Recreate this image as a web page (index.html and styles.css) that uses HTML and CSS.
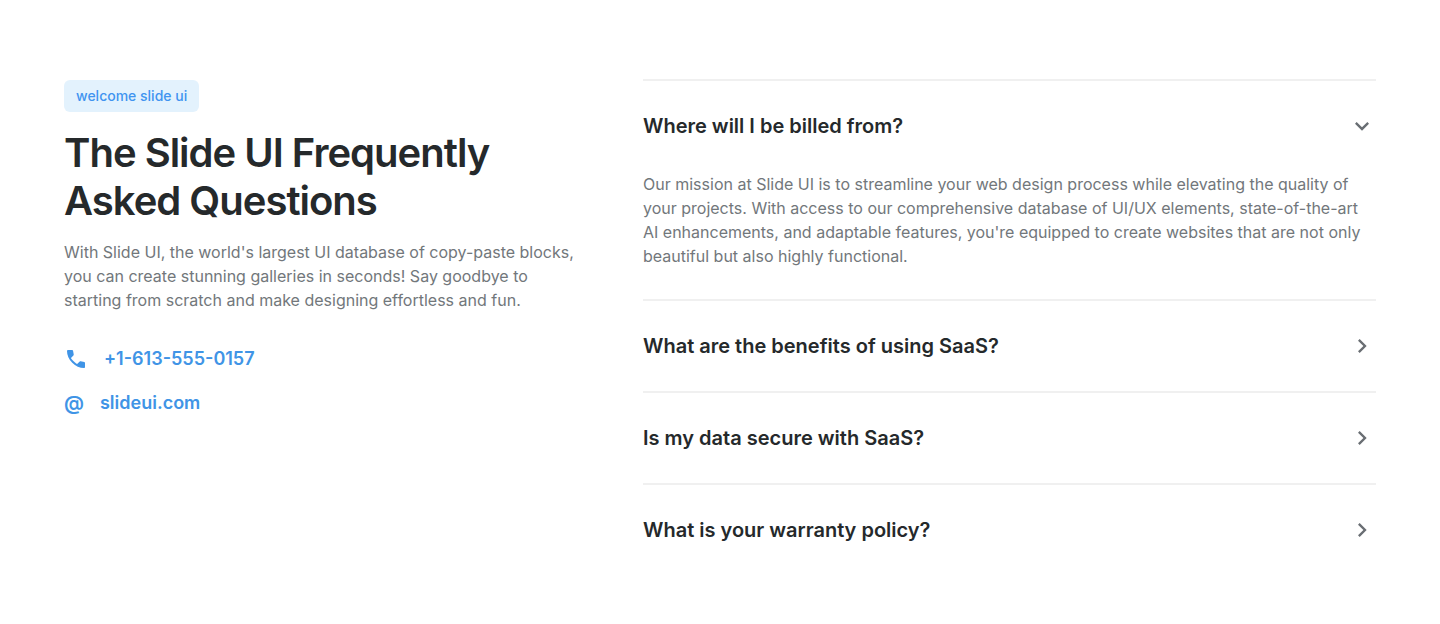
FILE: index.html
```html
<!DOCTYPE html>
<html lang="en">
<head>
<meta charset="utf-8">
<meta name="viewport" content="width=device-width, initial-scale=1">
<title>Slide UI FAQ</title>
<link rel="stylesheet" href="styles.css">
</head>
<body>
<main class="faq">
  <section class="intro">
    <span class="badge">welcome slide ui</span>
    <h1 class="title">The Slide UI Frequently Asked Questions</h1>
    <p class="text">With Slide UI, the world's largest UI database of copy-paste blocks, you can create stunning galleries in seconds! Say goodbye to starting from scratch and make designing effortless and fun.</p>
    <address class="contacts">
      <a class="contact" href="tel:+16135550157">
        <svg class="icon" viewBox="0 0 24 24" aria-hidden="true"><path fill="currentColor" d="M19.95 21q-3.125 0-6.175-1.363-3.05-1.362-5.55-3.862t-3.863-5.55Q3 7.175 3 4.05q0-.45.3-.75t.75-.3H8.1q.35 0 .625.238.275.237.325.562l.65 3.5q.05.4-.025.675-.075.275-.275.475L6.975 10.9q.5.925 1.188 1.787.687.863 1.512 1.663.775.775 1.625 1.438.85.662 1.8 1.212l2.35-2.35q.225-.225.588-.338.362-.112.712-.062l3.45.7q.35.1.575.363.225.262.225.587v4.05q0 .45-.3.75t-.75.3Z"/></svg>
        <span>+1-613-555-0157</span>
      </a>
      <a class="contact" href="https://slideui.com"><span class="at" aria-hidden="true">@</span><span>slideui.com</span></a>
    </address>
  </section>
  <section class="questions">
    <article class="item">
      <h2 class="heading"><button class="toggle" type="button" aria-expanded="true" aria-controls="answer"><span>Where will I be billed from?</span><svg class="chevron" viewBox="0 0 24 24" aria-hidden="true"><path d="M7.41 8.59 12 13.17l4.59-4.58L18 10l-6 6-6-6z"/></svg></button></h2>
      <p class="text answer" id="answer">Our mission at Slide UI is to streamline your web design process while elevating the quality of your projects. With access to our comprehensive database of UI/UX elements, state-of-the-art AI enhancements, and adaptable features, you're equipped to create websites that are not only beautiful but also highly functional.</p>
    </article>
    <article class="item"><h2 class="heading"><button class="toggle" type="button" aria-expanded="false"><span>What are the benefits of using SaaS?</span><svg class="chevron" viewBox="0 0 24 24" aria-hidden="true"><path d="M10 6 8.59 7.41 13.17 12l-4.58 4.59L10 18l6-6z"/></svg></button></h2></article>
    <article class="item"><h2 class="heading"><button class="toggle" type="button" aria-expanded="false"><span>Is my data secure with SaaS?</span><svg class="chevron" viewBox="0 0 24 24" aria-hidden="true"><path d="M10 6 8.59 7.41 13.17 12l-4.58 4.59L10 18l6-6z"/></svg></button></h2></article>
    <article class="item"><h2 class="heading"><button class="toggle" type="button" aria-expanded="false"><span>What is your warranty policy?</span><svg class="chevron" viewBox="0 0 24 24" aria-hidden="true"><path d="M10 6 8.59 7.41 13.17 12l-4.58 4.59L10 18l6-6z"/></svg></button></h2></article>
  </section>
</main>
</body>
</html>
```
FILE: styles.css
```css
* { box-sizing: border-box; }
body { margin: 0; background: #fff; color: #25292b; font-family: Inter, "Liberation Sans", sans-serif; }
.faq { display: grid; grid-template-columns: minmax(0, 515fr) minmax(0, 733fr); column-gap: 64px; padding: 79px 64px 48px; }
.badge { display: inline-block; margin-top: 1px; padding: 4px 12px; border-radius: 6px; background: #e3f2fd; color: #4094f0; font-size: 14px; line-height: 24px; font-weight: 500; }
.title { margin: 17px 0 15px; font-size: 40px; line-height: 48px; font-weight: 600; letter-spacing: -1px; }
.text { margin: 0; color: #72777b; font-size: 16px; line-height: 24px; }
.contacts { display: flex; flex-direction: column; align-items: flex-start; gap: 20px; margin-top: 35px; font-style: normal; }
.contact { display: flex; align-items: center; gap: 16px; color: #4094e6; font-size: 18px; line-height: 24px; font-weight: 600; text-decoration: none; }
.icon { width: 24px; height: 24px; }
.at { font-size: 20px; }
.item { border-top: 2px solid #f0f0f0; }
.heading { margin: 0; font-size: 20px; line-height: 28px; font-weight: 600; }
.toggle { display: flex; align-items: center; justify-content: space-between; width: 100%; padding: 31px 0; border: 0; background: none; color: inherit; font: inherit; text-align: left; cursor: pointer; }
.chevron { width: 28px; height: 28px; fill: #696e73; }
.answer { padding: 1px 0 31px; }
```
